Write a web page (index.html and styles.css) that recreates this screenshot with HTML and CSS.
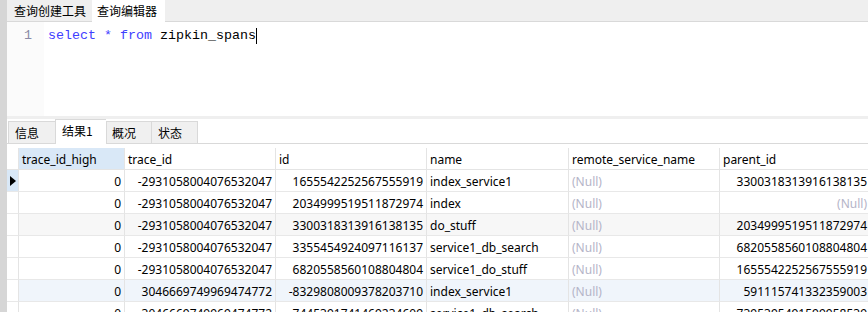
FILE: index.html
```html
<!DOCTYPE html>
<html>
<head>
<meta charset="utf-8">
<link rel="stylesheet" href="styles.css">
</head>
<body>
<div class="app">
  <div class="leftbar"></div>
  <div class="main">
    <div class="toptabs">
      <div class="ttab">查询创建工具</div>
      <div class="ttab active">查询编辑器</div>
    </div>
    <div class="editor">
      <div class="gutter"><span class="lineno">1</span></div>
      <div class="code"><span class="kw">select</span> <span class="kw">*</span> <span class="kw">from</span> zipkin_spans<span class="caret"></span></div>
    </div>
    <div class="splitter"></div>
    <div class="restabs">
      <div class="rtab">信息</div>
      <div class="rtab active">结果1</div>
      <div class="rtab">概况</div>
      <div class="rtab">状态</div>
    </div>
    <div class="gridwrap">
      <div class="grid">
        <div class="c ind hd"></div>
        <div class="c hd sel">trace_id_high</div>
        <div class="c hd">trace_id</div>
        <div class="c hd">id</div>
        <div class="c hd">name</div>
        <div class="c hd">remote_service_name</div>
        <div class="c hd">parent_id</div>

        <div class="c ind cur"><span class="tri"></span></div>
        <div class="c r">0</div>
        <div class="c r">-2931058004076532047</div>
        <div class="c r">1655542252567555919</div>
        <div class="c">index_service1</div>
        <div class="c null">(Null)</div>
        <div class="c r">3300318313916138135</div>

        <div class="c ind"></div>
        <div class="c r">0</div>
        <div class="c r">-2931058004076532047</div>
        <div class="c r">2034999519511872974</div>
        <div class="c">index</div>
        <div class="c null">(Null)</div>
        <div class="c r null">(Null)</div>

        <div class="c ind"></div>
        <div class="c r alt">0</div>
        <div class="c r alt">-2931058004076532047</div>
        <div class="c r alt">3300318313916138135</div>
        <div class="c alt">do_stuff</div>
        <div class="c null alt">(Null)</div>
        <div class="c r alt">2034999519511872974</div>

        <div class="c ind"></div>
        <div class="c r">0</div>
        <div class="c r">-2931058004076532047</div>
        <div class="c r">3355454924097116137</div>
        <div class="c">service1_db_search</div>
        <div class="c null">(Null)</div>
        <div class="c r">6820558560108804804</div>

        <div class="c ind"></div>
        <div class="c r">0</div>
        <div class="c r">-2931058004076532047</div>
        <div class="c r">6820558560108804804</div>
        <div class="c">service1_do_stuff</div>
        <div class="c null">(Null)</div>
        <div class="c r">1655542252567555919</div>

        <div class="c ind"></div>
        <div class="c r hov">0</div>
        <div class="c r hov">3046669749969474772</div>
        <div class="c r hov">-8329808009378203710</div>
        <div class="c hov">index_service1</div>
        <div class="c null hov">(Null)</div>
        <div class="c r hov">591115741332359003</div>

        <div class="c ind"></div>
        <div class="c r">0</div>
        <div class="c r">3046669749969474772</div>
        <div class="c r">7445391741469234609</div>
        <div class="c">service1_db_search</div>
        <div class="c null">(Null)</div>
        <div class="c r">7395395491599958539</div>
      </div>
    </div>
  </div>
</div>
</body>
</html>
```

FILE: styles.css
```css
html, body {
  margin: 0;
  padding: 0;
  background: #ffffff;
}
body {
  width: 868px;
  height: 312px;
  overflow: hidden;
  font-family: "Noto Sans", "Noto Sans CJK SC", sans-serif;
  font-size: 12px;
  color: #000;
}
.app {
  display: flex;
  height: 312px;
}
.leftbar {
  width: 7px;
  flex: none;
  background: #d6d6d6;
}
.main {
  flex: 1;
  min-width: 0;
  display: flex;
  flex-direction: column;
}
.toptabs {
  height: 21px;
  background: #efefef;
  border-bottom: 1px solid #d9d9d9;
  display: flex;
  flex: none;
}
.ttab {
  height: 21px;
  line-height: 21px;
  padding: 0 5px 0 7px;
  font-family: "Noto Sans CJK SC", sans-serif;
  font-size: 12px;
  color: #000;
}
.ttab.active {
  background: #ffffff;
  height: 22px;
  margin-left: 1px;
  padding: 0 8px 0 5px;
}
.editor {
  height: 94px;
  display: flex;
  flex: none;
  background: #fff;
}
.gutter {
  width: 37px;
  background: #fbfbfb;
  font-family: "Liberation Mono", monospace;
  font-size: 13.33px;
  color: #8a8aa6;
  padding-top: 6px;
  box-sizing: border-box;
  text-align: right;
  padding-right: 12px;
  line-height: 16px;
}
.code {
  padding: 6px 0 0 4px;
  font-family: "Liberation Mono", monospace;
  font-size: 13.33px;
  line-height: 16px;
  color: #000;
  white-space: pre;
}
.kw { color: #4040ff; }
.caret {
  display: inline-block;
  width: 1px;
  height: 16px;
  background: #000;
  vertical-align: top;
}
.splitter {
  height: 3px;
  background: #efefef;
  flex: none;
}
.restabs {
  height: 24px;
  display: flex;
  align-items: flex-end;
  border-bottom: 1px solid #d9d9d9;
  padding-left: 1px;
  flex: none;
}
.rtab {
  height: 21px;
  line-height: 21px;
  background: #f0f0f0;
  border: 1px solid #d9d9d9;
  border-bottom: none;
  border-right: none;
  padding: 0 0 0 6px;
  font-family: "Noto Sans CJK SC", sans-serif;
  font-size: 12px;
  box-sizing: content-box;
}
.rtab:nth-child(1) { width: 40px; }
.rtab:nth-child(3) { width: 39px; padding-left: 5px; }
.rtab:nth-child(4) { width: 39px; padding-left: 6px; border-right: 1px solid #d9d9d9; }
.rtab.active {
  background: #fff;
  height: 24px;
  margin-bottom: -1px;
  line-height: 22px;
  width: 44px;
  padding-left: 6px;
}
.gridwrap {
  padding-top: 4px;
  overflow: hidden;
}
.grid {
  display: grid;
  grid-template-columns: 12px 106px 151px 151px 142px 151px 151px;
  grid-auto-rows: 22px;
  width: 864px;
}
.c {
  box-sizing: border-box;
  border-right: 1px solid #e4e4e4;
  border-bottom: 1px solid #e8e8e8;
  padding: 2px 3px 0 3px;
  line-height: 19px;
  white-space: nowrap;
  overflow: hidden;
}
.c.r { text-align: right; }
.c.hd { background: #fff; border-bottom-color: #e4e4e4; }
.c.hd.sel { background: #d9e8f7; }
.c.ind { padding: 0; position: relative; }
.c.ind.cur { background: #d9e8f7; }
.tri {
  position: absolute;
  left: 3px;
  top: 6px;
  width: 0;
  height: 0;
  border-top: 5px solid transparent;
  border-bottom: 5px solid transparent;
  border-left: 6px solid #000;
}
.null { color: #b4b4c8; }
.alt { background: #f7f7f7; }
.hov { background: #f0f5fb; }
```
